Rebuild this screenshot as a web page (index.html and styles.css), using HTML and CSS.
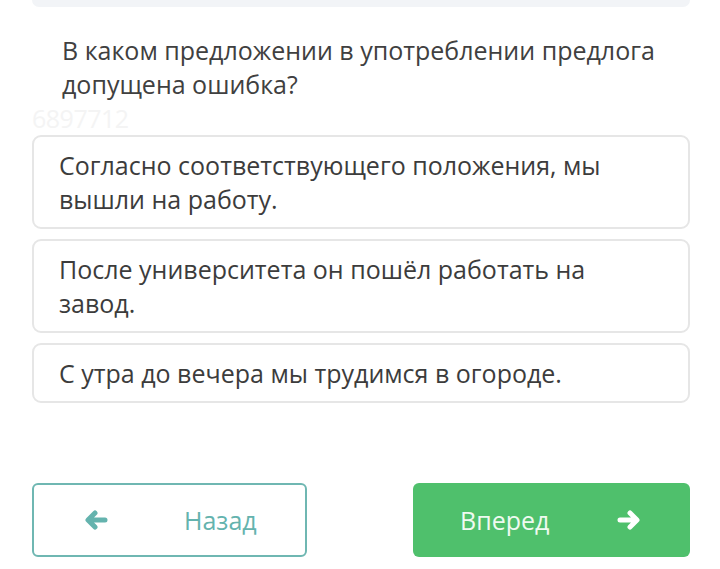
FILE: index.html
```html
<!DOCTYPE html>
<html lang="ru">
<head>
<meta charset="utf-8">
<link rel="stylesheet" href="styles.css">
</head>
<body>
<div class="page">
  <div class="topbar"></div>
  <div class="question">В каком предложении в употреблении предлога допущена ошибка?</div>
  <div class="watermark">6897712</div>
  <div class="options">
    <div class="option">Согласно соответствующего положения, мы вышли на работу.</div>
    <div class="option">После университета он пошёл работать на завод.</div>
    <div class="option">С утра до вечера мы трудимся в огороде.</div>
  </div>
  <div class="nav">
    <button class="btn back">
      <svg class="arrow" width="24" height="20" viewBox="0 0 24 20"><path d="M21 10H5M11 3L4 10l7 7" fill="none" stroke="currentColor" stroke-width="5" stroke-linecap="round" stroke-linejoin="round"/></svg>
      <span class="label">Назад</span>
    </button>
    <button class="btn next">
      <span class="label">Вперед</span>
      <svg class="arrow" width="24" height="20" viewBox="0 0 24 20"><path d="M3 10h16M13 3l7 7-7 7" fill="none" stroke="currentColor" stroke-width="5" stroke-linecap="round" stroke-linejoin="round"/></svg>
    </button>
  </div>
</div>
</body>
</html>
```
FILE: styles.css
```css
* { box-sizing: border-box; }
html, body { margin: 0; padding: 0; background: #fff; }
body { font-family: "Open Sans", "Noto Sans", sans-serif; color: #3c3c3c; width: 720px; height: 569px; overflow: hidden; }
.page { padding: 0 30px 0 32px; }
.topbar { height: 7px; background: #f2f4f7; border-radius: 0 0 8px 8px; }
.question { font-size: 25px; line-height: 34px; padding: 26px 0 0 30px; color: #404040; }
.watermark { font-size: 25px; line-height: 28px; color: #f4f4f4; height: 28px; margin: 3px 0 3px; letter-spacing: -0.5px; }
.options { display: flex; flex-direction: column; gap: 10px; }
.option { border: 2px solid #e6e6e6; border-radius: 9px; padding: 11px 64px 11px 25px; font-size: 25px; line-height: 34px; color: #3c3c3c; }
.nav { display: flex; justify-content: space-between; margin-top: 80px; }
.btn { font-family: inherit; font-size: 25px; height: 74px; border-radius: 6px; display: flex; align-items: center; padding: 0; cursor: pointer; }
.back { width: 275px; background: #fff; border: 2px solid #6fb7b2; color: #64b3ae; }
.back .arrow { margin-left: 50px; }
.back .label { margin-left: 76px; }
.next { width: 277px; background: #4fc06c; border: none; color: #fff; }
.next .label { margin-left: 47px; color: #effaf1; }
.next .arrow { margin-left: 68px; }
```
